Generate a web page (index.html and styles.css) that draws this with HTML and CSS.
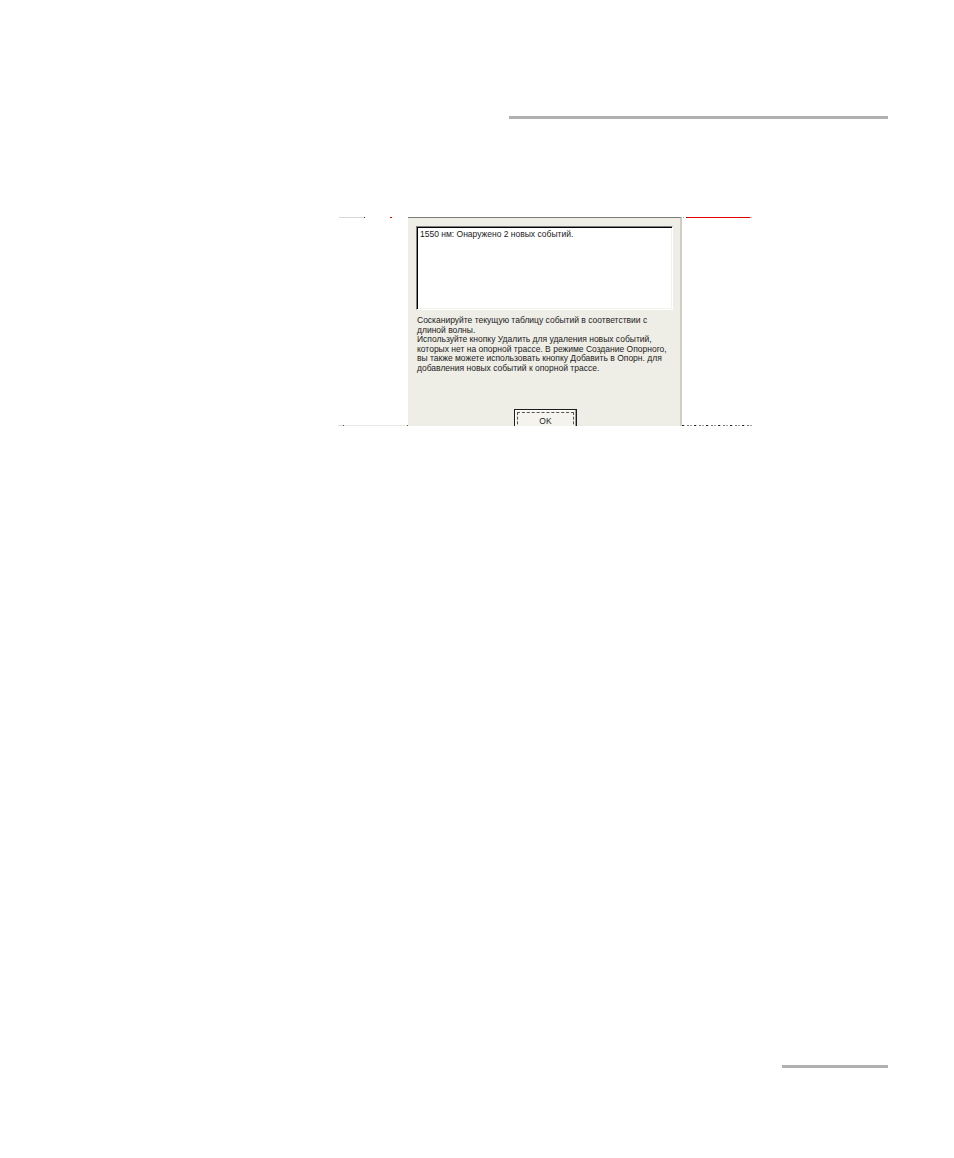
FILE: index.html
```html
<!DOCTYPE html>
<html lang="ru">
<head>
<meta charset="utf-8">
<title>События</title>
<link rel="stylesheet" href="styles.css">
</head>
<body>
<div class="page">
  <div class="rule-top"></div>
  <div class="figure">
    <div class="strip strip-left">
      <div class="edge edge-left-top"></div>
      <div class="edge edge-left-bottom"></div>
    </div>
    <div class="panel">
      <div class="textbox">1550 нм: Онаружено 2 новых событий.</div>
      <p class="message">Сосканируйте текущую таблицу событий в соответствии с<br>длиной волны.<br>Используйте кнопку Удалить для удаления новых событий,<br>которых нет на опорной трассе. В режиме Создание Опорного,<br>вы также можете использовать кнопку Добавить в Опорн. для<br>добавления новых событий к опорной трассе.</p>
      <div class="actions">
        <button class="ok-btn" type="button"><span class="focus">OK</span></button>
      </div>
    </div>
    <div class="strip strip-right">
      <div class="edge edge-right-top"></div>
      <div class="edge edge-right-bottom"></div>
    </div>
  </div>
  <div class="rule-bottom"></div>
</div>
</body>
</html>
```
FILE: styles.css
```css
html, body {
  margin: 0;
  padding: 0;
  background: #ffffff;
}

.page {
  width: 954px;
  height: 1158px;
  position: relative;
  overflow: hidden;
  display: flex;
  flex-direction: column;
  font-family: "Liberation Sans", Arial, sans-serif;
}

.rule-top {
  margin-top: 116px;
  margin-left: 509px;
  width: 379px;
  height: 3px;
  background: #b1b1b1;
}

.figure {
  margin-top: 98px;
  margin-left: 338px;
  width: 414px;
  height: 209px;
  display: flex;
}

.strip {
  width: 70px;
  display: flex;
  flex-direction: column;
  justify-content: space-between;
}

.edge {
  height: 1px;
}

.edge-left-top {
  background: linear-gradient(to right,
    transparent 0, transparent 1px,
    #d8d8d4 1px, #d8d8d4 26px,
    #333 26px, #333 27px,
    transparent 27px, transparent 52px,
    #e00000 52px, #e00000 54px,
    transparent 54px);
}

.edge-left-bottom {
  background: linear-gradient(to right,
    #dddddd 0, #dddddd 5px,
    #555 5px, #555 6px,
    #e8e8e4 6px, #e8e8e4 69px,
    #555 69px, #555 70px);
}

.edge-right-top {
  background: linear-gradient(to right,
    transparent 0, transparent 1px,
    #a8a8b0 1px, #a8a8b0 2px,
    transparent 2px, transparent 4px,
    #e00000 4px, #e00000 68px,
    #b0b0c0 68px, #b0b0c0 70px);
}

.edge-right-bottom {
  background: repeating-linear-gradient(to right,
    #222 0, #222 2px,
    #c8c8d4 2px, #c8c8d4 3px,
    #ffffff 3px, #ffffff 5px,
    #777 5px, #777 7px,
    #fff 7px, #fff 8px,
    #999aa8 8px, #999aa8 10px,
    #fff 10px, #fff 12px);
}

.panel {
  width: 274px;
  box-sizing: border-box;
  background: #eeede6;
  border-top: 1px solid #7c7c78;
  border-right: 2px solid #cfcec6;
  padding: 8px 0 0 8px;
  overflow: hidden;
}

.textbox {
  width: 257px;
  height: 84px;
  box-sizing: border-box;
  background: #ffffff;
  border-top: 1px solid #808080;
  border-left: 1px solid #808080;
  border-right: 1px solid #ffffff;
  border-bottom: 1px solid #ffffff;
  box-shadow: inset 1px 1px 0 #000000, inset -1px -1px 0 #f2f1ea;
  padding: 2px 3px;
  font-size: 8.5px;
  line-height: 10px;
  color: #222;
  white-space: nowrap;
}

.message {
  margin: 6px 0 0 1px;
  font-size: 8.5px;
  line-height: 9.5px;
  color: #222;
  white-space: nowrap;
}

.actions {
  margin-top: 36px;
  display: flex;
  justify-content: center;
  padding-right: 5px;
}

.ok-btn {
  width: 63px;
  height: 23px;
  margin: 0;
  padding: 2px;
  box-sizing: border-box;
  background: #f4f3ee;
  border: 1px solid #1c1c1c;
  box-shadow: inset -1px -1px 0 #9c9c98, inset 1px 1px 0 #ffffff;
  font-family: "Liberation Sans", Arial, sans-serif;
  font-size: 8.5px;
  color: #222;
  display: flex;
}

.focus {
  flex: 1;
  border: 1px dashed #555;
  display: flex;
  justify-content: center;
  padding-top: 3px;
  line-height: 10px;
}

.rule-bottom {
  margin-top: 639px;
  margin-left: 782px;
  width: 106px;
  height: 3px;
  background: #b1b1b1;
}
```
